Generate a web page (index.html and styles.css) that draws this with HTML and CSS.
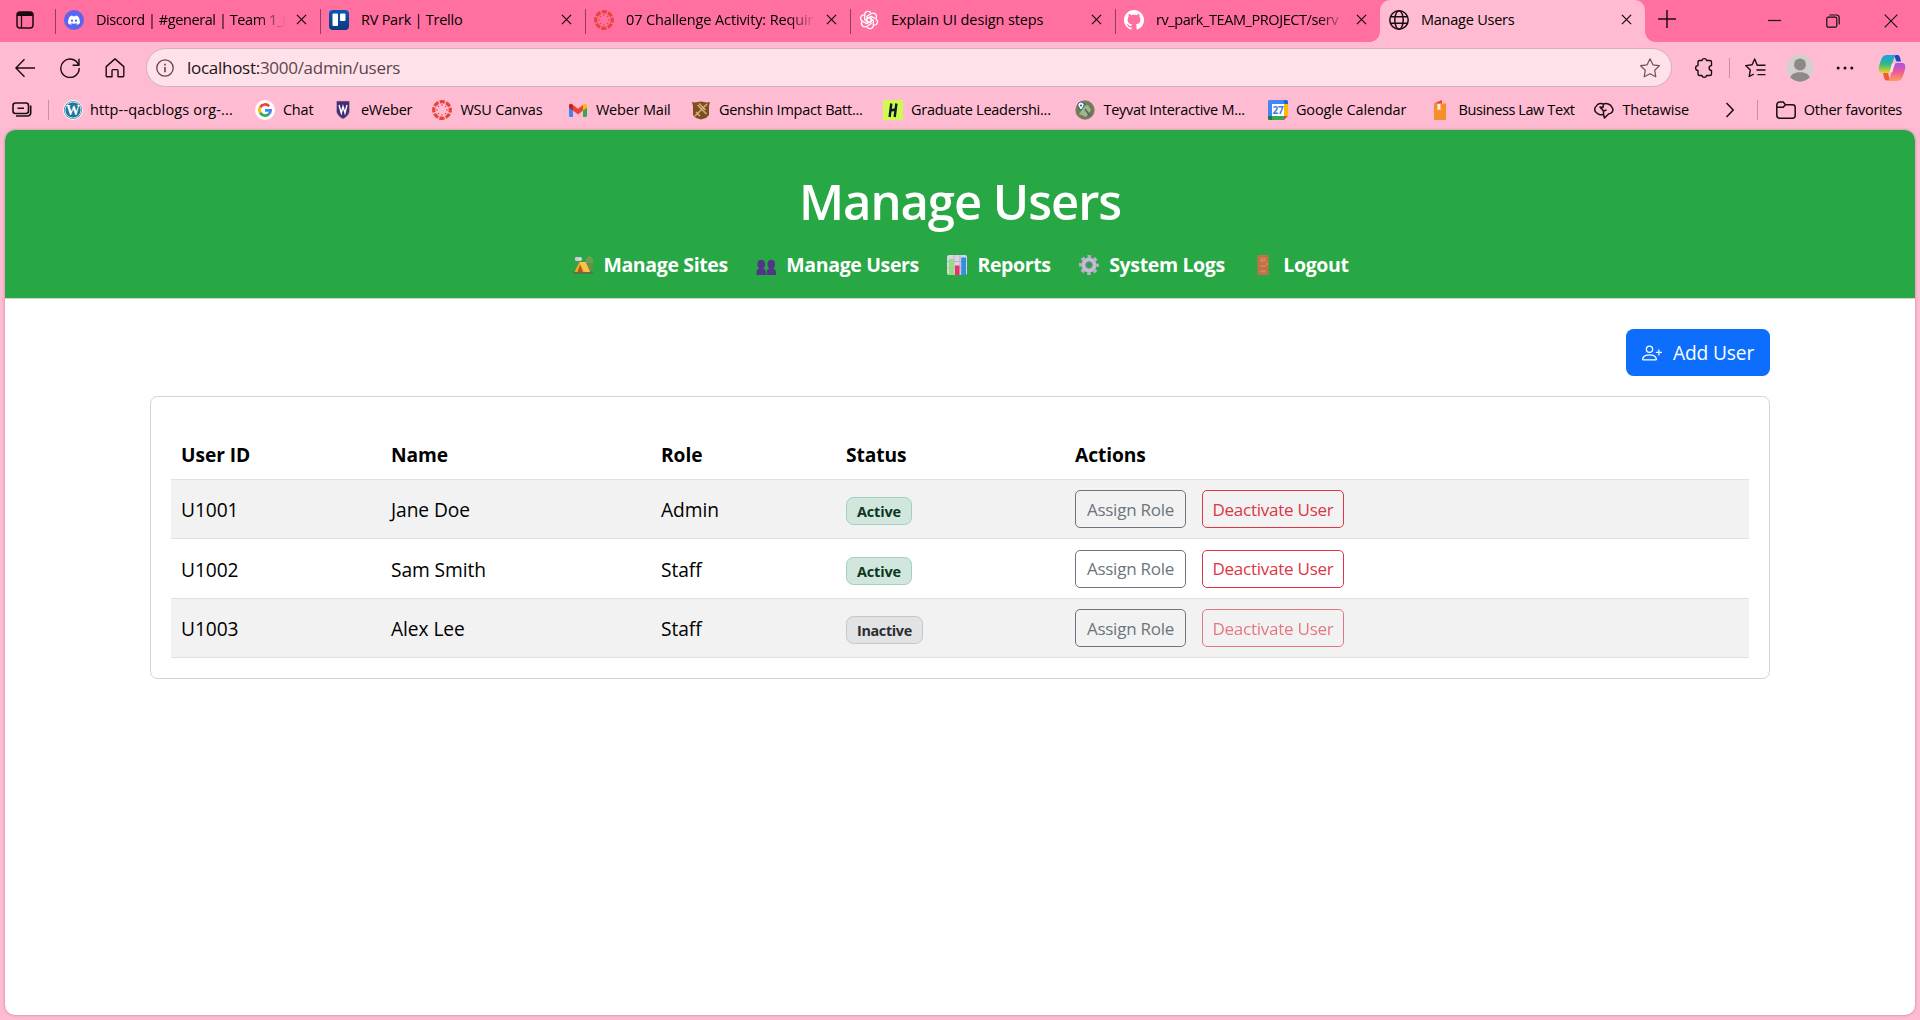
FILE: index.html
```html
<!DOCTYPE html>
<html lang="en">
<head>
<meta charset="utf-8">
<title>Manage Users</title>
<link rel="stylesheet" href="styles.css">
</head>
<body>
<svg class="defs" width="0" height="0" aria-hidden="true">
  <symbol id="x" viewBox="0 0 12 12"><path d="M1 1l10 10M11 1L1 11" fill="none" stroke="currentColor" stroke-width="1.4"/></symbol>
  <symbol id="canvas" viewBox="0 0 20 20">
    <circle cx="10" cy="10" r="8.3" fill="none" stroke="#e8433a" stroke-width="3.2" stroke-dasharray="5.2 1.32" stroke-dashoffset="2.6"/>
    <g fill="#e8433a"><circle cx="10" cy="5" r=".8"/><circle cx="10" cy="15" r=".8"/><circle cx="5" cy="10" r=".8"/><circle cx="15" cy="10" r=".8"/><circle cx="6.5" cy="6.5" r=".8"/><circle cx="13.5" cy="6.5" r=".8"/><circle cx="6.5" cy="13.5" r=".8"/><circle cx="13.5" cy="13.5" r=".8"/></g>
  </symbol>
</svg>

<header class="tabs">
  <div class="workspace">
    <svg width="18" height="18" viewBox="0 0 18 18"><rect x="1" y="1" width="16" height="16" rx="3" fill="none" stroke="#1a0a10" stroke-width="1.5"/><path d="M1 5V4a3 3 0 0 1 3-3h10a3 3 0 0 1 3 3v1z" fill="#1a0a10"/><path d="M5.5 5v12" stroke="#1a0a10" stroke-width="1.3"/></svg>
  </div>
  <div class="tab">
    <svg class="fav" viewBox="0 0 20 20"><circle cx="10" cy="10" r="10" fill="#5865f2"/><path transform="translate(4 4.2) scale(.75)" fill="#fff" d="M13.545 2.907a13.2 13.2 0 0 0-3.257-1.011.05.05 0 0 0-.052.025c-.141.25-.297.577-.406.833a12.2 12.2 0 0 0-3.658 0 8 8 0 0 0-.412-.833.05.05 0 0 0-.052-.025c-1.125.194-2.22.534-3.257 1.011a.04.04 0 0 0-.021.018C.356 6.024-.213 9.047.066 12.032q.003.022.021.037a13.3 13.3 0 0 0 3.995 2.02.05.05 0 0 0 .056-.019q.463-.63.818-1.329a.05.05 0 0 0-.01-.059l-.018-.011a9 9 0 0 1-1.248-.595.05.05 0 0 1-.005-.085q.126-.093.248-.195a.05.05 0 0 1 .051-.007c2.619 1.196 5.454 1.196 8.041 0a.05.05 0 0 1 .053.007q.121.1.248.195a.05.05 0 0 1-.004.085 8 8 0 0 1-1.249.594.05.05 0 0 0-.03.03.05.05 0 0 0 .003.041c.24.465.515.909.817 1.329a.05.05 0 0 0 .056.019 13.2 13.2 0 0 0 4.001-2.02.05.05 0 0 0 .021-.037c.334-3.451-.559-6.449-2.366-9.106a.03.03 0 0 0-.02-.019M5.347 10.214c-.789 0-1.438-.724-1.438-1.612s.637-1.613 1.438-1.613c.807 0 1.45.73 1.438 1.613 0 .888-.637 1.612-1.438 1.612m5.316 0c-.788 0-1.438-.724-1.438-1.612s.637-1.613 1.438-1.613c.807 0 1.451.73 1.438 1.613 0 .888-.631 1.612-1.438 1.612"/></svg>
    <span class="label fade">Discord | #general | Team 1_(</span>
    <svg class="close"><use href="#x"/></svg>
  </div>
  <div class="tab">
    <svg class="fav" viewBox="0 0 20 20"><defs><linearGradient id="tr" x2="0" y2="1"><stop stop-color="#0c57b5"/><stop offset="1" stop-color="#0a3a80"/></linearGradient></defs><rect width="20" height="20" rx="4" fill="url(#tr)"/><rect x="3.5" y="3.5" width="5.5" height="12.5" rx="1" fill="#fff"/><rect x="11" y="3.5" width="5.5" height="7.5" rx="1" fill="#fff"/></svg>
    <span class="label">RV Park | Trello</span>
    <svg class="close"><use href="#x"/></svg>
  </div>
  <div class="tab">
    <svg class="fav"><use href="#canvas"/></svg>
    <span class="label fade long">07 Challenge Activity: Requir</span>
    <svg class="close"><use href="#x"/></svg>
  </div>
  <div class="tab">
    <svg class="fav" viewBox="0 0 20 20" fill="none" stroke="#fff" stroke-width="1.25" stroke-linejoin="round">
      <g id="petal"><path d="M8 12.6V6.2l4.6-2.7c3-1.5 6.2 1.9 4.3 4.9"/></g>
      <use href="#petal" transform="rotate(60 10 10)"/><use href="#petal" transform="rotate(120 10 10)"/><use href="#petal" transform="rotate(180 10 10)"/><use href="#petal" transform="rotate(240 10 10)"/><use href="#petal" transform="rotate(300 10 10)"/>
    </svg>
    <span class="label long">Explain UI design steps</span>
    <svg class="close"><use href="#x"/></svg>
  </div>
  <div class="tab last">
    <svg class="fav" viewBox="0 0 16 16"><path fill="#fff" d="M8 0C3.58 0 0 3.58 0 8c0 3.54 2.29 6.53 5.47 7.59.4.07.55-.17.55-.38 0-.19-.01-.82-.01-1.49-2.01.37-2.53-.49-2.69-.94-.09-.23-.48-.94-.82-1.13-.28-.15-.68-.52-.01-.53.63-.01 1.08.58 1.23.82.72 1.21 1.87.87 2.33.66.07-.52.28-.87.51-1.07-1.78-.2-3.64-.89-3.64-3.95 0-.87.31-1.59.82-2.15-.08-.2-.36-1.02.08-2.12 0 0 .67-.21 2.2.82.64-.18 1.32-.27 2-.27s1.36.09 2 .27c1.53-1.04 2.2-.82 2.2-.82.44 1.1.16 1.92.08 2.12.51.56.82 1.27.82 2.15 0 3.07-1.87 3.75-3.65 3.95.29.25.54.73.54 1.48 0 1.07-.01 1.93-.01 2.2 0 .21.15.46.55.38A8.01 8.01 0 0 0 16 8c0-4.42-3.58-8-8-8"/></svg>
    <span class="label fade">rv_park_TEAM_PROJECT/serv</span>
    <svg class="close"><use href="#x"/></svg>
  </div>
  <div class="tab active">
    <svg class="fav" viewBox="0 0 20 20" fill="none" stroke="#1b0c12" stroke-width="1.5"><circle cx="10" cy="10" r="9.2"/><ellipse cx="10" cy="10" rx="4.2" ry="9.2"/><path d="M1.7 6.7h16.6M1.7 13.3h16.6"/></svg>
    <span class="label">Manage Users</span>
    <svg class="close"><use href="#x"/></svg>
  </div>
  <svg class="plus" width="18" height="18" viewBox="0 0 18 18"><path d="M9 0v18M0 9h18" stroke="#1b0c12" stroke-width="1.5"/></svg>
  <div class="window">
    <svg width="14" height="14" viewBox="0 0 14 14"><path d="M0 6.5h13" stroke="#111" stroke-width="1.2"/></svg>
    <svg width="14" height="14" viewBox="0 0 14 14" fill="none" stroke="#111" stroke-width="1.2"><rect x=".8" y="3.2" width="10" height="10" rx="1.5"/><path d="M3.5 1h7.2a2.5 2.5 0 0 1 2.5 2.5v7"/></svg>
    <svg width="14" height="14" viewBox="0 0 14 14"><path d="M.7.7l12.6 12.6M13.3.7L.7 13.3" stroke="#111" stroke-width="1.1"/></svg>
  </div>
</header>

<div class="toolbar">
  <svg width="20" height="20" viewBox="0 0 20 20" class="line"><path d="M20 10H1M9.5 1.2L.9 10l8.6 8.8"/></svg>
  <svg width="20" height="20" viewBox="0 0 20 20" class="line"><path d="M18.6 7A9.2 9.2 0 1 0 19.2 10M19 .8v6.4h-6.4"/></svg>
  <svg width="20" height="20" viewBox="0 0 20 20" class="line"><path d="M1.2 8.6L10 .9l8.8 7.7v9.2a1 1 0 0 1-1 1H13v-6.2a1 1 0 0 0-1-1H8a1 1 0 0 0-1 1v6.2H2.200a1 1 0 0 1-1-1z"/></svg>
  <div class="address">
    <svg width="18" height="18" viewBox="0 0 18 18" fill="none" stroke="#5b484f" stroke-width="1.3"><circle cx="9" cy="9" r="8.2"/><path d="M9 8v5.200M9 4.800v1.600" stroke-width="1.6"/></svg>
    <span class="url">localhost:<span>3000/admin/users</span></span>
    <svg class="star" width="22" height="22" viewBox="0 0 22 22" fill="none" stroke="#6b555d" stroke-width="1.2" stroke-linejoin="round"><path d="M11 1.800l2.900 6 6.500.9-4.700 4.600 1.100 6.500L11 16.700l-5.800 3.100 1.100-6.500L1.600 8.700l6.500-.9z"/></svg>
  </div>
  <div class="tools">
    <svg width="22" height="22" viewBox="0 0 22 22" class="line"><path d="M6.500 3.500h2.400a2.400 2.400 0 0 1 4.700 0H17a1.500 1.500 0 0 1 1.500 1.500v3.600a2.400 2.400 0 1 0 0 4.800V17a1.500 1.500 0 0 1-1.500 1.500h-3.400a2.400 2.400 0 0 1-4.700 0H6.500A1.500 1.500 0 0 1 5 17v-3.600a2.400 2.400 0 0 1 0-4.800V5a1.500 1.500 0 0 1 1.500-1.500z"/></svg>
    <i class="rule"></i>
    <svg width="22" height="22" viewBox="0 0 22 22" class="line"><path d="M14.200 8.300h-1L10.700 2 8.100 7.700l-6.400.9 4.600 4.500-1.100 6.400 4.500-2.400M14 8.300h7.500M12.500 13h9M13.500 17.600h8"/></svg>
    <svg class="avatar" width="28" height="28" viewBox="0 0 28 28"><circle cx="14" cy="14" r="13.500" fill="#d2cfcd"/><circle cx="14" cy="10.500" r="6" fill="#8d8986"/><path d="M4.300 23.500C6 16.500 22 16.500 23.700 23.500 18 29 10 29 4.300 23.500z" fill="#8d8986"/></svg>
    <svg width="18" height="18" viewBox="0 0 18 18" fill="#1b0c12"><circle cx="2.200" cy="9" r="1.500"/><circle cx="9" cy="9" r="1.500"/><circle cx="15.800" cy="9" r="1.500"/></svg>
    <svg class="copilot" width="28" height="28" viewBox="0 0 28 28">
      <defs>
        <linearGradient id="c1" x2="0" y2="1"><stop stop-color="#1aa0e8"/><stop offset=".5" stop-color="#2fb98a"/><stop offset="1" stop-color="#f5d21a"/></linearGradient>
        <linearGradient id="c2" x2="0" y2="1"><stop stop-color="#a352f2"/><stop offset=".5" stop-color="#ee5b92"/><stop offset="1" stop-color="#fba05c"/></linearGradient>
      </defs>
      <path d="M16 1h3.500c2.300 0 2.700 3 3.500 6.500h-4.500z" fill="#1748bd"/>
      <path d="M9.500 1h8.700c-2.600 2-3 6-5 14-.7 2.700-2 4-4.500 4H4C-.5 19 .3 14 2.500 7.500 4 3 5.500 1 9.500 1z" fill="url(#c1)"/>
      <path d="M12 26.500H8.500C6.200 26.500 5.800 22 5 19h5z" fill="#f05a36"/>
      <path d="M18.500 27H9.800c2.600-2 3-6 5-14 .7-2.700 2-4 4.500-4H24c4.500 0 3.700 5 1.500 11.500C24 25 22.500 27 18.500 27z" fill="url(#c2)"/>
      <path d="M13.900 9.500h3.300c-1 1.300-1.800 5-2.800 8.800H11.500c1-2.500 1.500-5.500 2.400-8.800z" fill="#ffe1ea"/>
    </svg>
  </div>
</div>

<nav class="bookmarks">
  <svg width="20" height="16" viewBox="0 0 20 16" fill="none" stroke="#1b0c12" stroke-width="1.6"><rect x="1" y="1" width="15.500" height="10.500" rx="2.500"/><path d="M5.500 6.200h6.500M18.700 3.500V11a3 3 0 0 1-3 3H4"/></svg>
  <i class="rule"></i>
  <div class="list">
    <a class="wide"><svg viewBox="0 0 20 20"><circle cx="10" cy="10" r="10" fill="#f6fafc"/><circle cx="10" cy="10" r="9" fill="#21759b"/><circle cx="10" cy="10" r="8" fill="none" stroke="#f6fafc" stroke-width=".8"/><text x="10" y="15.300" class="wp">W</text></svg>http--qacblogs org-...</a>
    <a><svg viewBox="0 0 20 20"><circle cx="10" cy="10" r="10" fill="#fff"/><g fill="none" stroke-width="2.700"><path d="M14.100 6.200A5.600 5.600 0 0 0 5.200 7.200" stroke="#ea4335"/><path d="M5.200 7.200a5.600 5.600 0 0 0 0 5.600" stroke="#fbbc05"/><path d="M5.200 12.800a5.600 5.600 0 0 0 8.700 1.200" stroke="#34a853"/><path d="M13.900 14a5.600 5.600 0 0 0 1.700-3.700H10" stroke="#4285f4"/></g></svg>Chat</a>
    <a><svg viewBox="0 0 20 20"><path d="M3.500 1h13v9.500c0 4-3 6.500-6.500 8.500-3.500-2-6.500-4.500-6.500-8.500z" fill="#442b72" stroke="#c9a7c9" stroke-width=".6"/><path d="M6 5l2.300 8L10 6.500l2 6.500L14 5" fill="none" stroke="#fff" stroke-width="1.400"/></svg>eWeber</a>
    <a><svg><use href="#canvas"/></svg>WSU Canvas</a>
    <a><svg viewBox="0 0 20 20"><path d="M1 6h4v11H2.300A1.300 1.300 0 0 1 1 15.700z" fill="#4285f4"/><path d="M15 6h4v9.700a1.300 1.300 0 0 1-1.300 1.300H15z" fill="#34a853"/><path d="M15 5c2-2.200 4-1.500 4 .7v2L15 10.600z" fill="#fbbc05"/><path d="M5 5C3 2.800 1 3.500 1 5.700v2L5 10.600z" fill="#c5221f"/><path d="M5 5l5 3.800L15 5v5.600l-5 3.800-5-3.800z" fill="#ea4335"/></svg>Weber Mail</a>
    <a><svg viewBox="0 0 20 20"><path d="M1 2l3 .5L10 1.500l6 1L19 2l-1 4v9l-3 3-5 1.500L5 18l-3-3V6z" fill="#7a4f24"/><path d="M4 16L16 4M6.500 5l9 9M8 3.500l6.500 6.500M5 12l4 4" stroke="#d7b173" stroke-width="1.500"/></svg>Genshin Impact Batt...</a>
    <a><svg viewBox="0 0 20 20"><path d="M0 0h20v20H0z" fill="#d0fb4c"/><path d="M8.300 3.500L6.600 17M13.400 3.500L11.700 17M7.500 10.500l5-1" stroke="#101b2d" stroke-width="2.400"/></svg>Graduate Leadershi...</a>
    <a><svg viewBox="0 0 20 20"><circle cx="10" cy="10" r="9" fill="#687f5b" stroke="#89785f" stroke-width="1.400"/><path d="M4 14c3-3 3-8 9-9l3 5-5 7z" fill="#a5b48c"/><path d="M10 9l5 7" stroke="#476759" stroke-width="1.500"/><path d="M6 10.500L3.400 6.700a3.100 3.100 0 1 1 5.200 0z" fill="#eef7f8" stroke="#315c71"/><circle cx="6" cy="5.500" r="1" fill="#30596c"/></svg>Teyvat Interactive M...</a>
    <a><svg viewBox="0 0 20 20"><path d="M0 1.500A1.500 1.500 0 0 1 1.500 0H16v4H4v12H0z" fill="#4285f4"/><path d="M16 0h2.500A1.500 1.500 0 0 1 20 1.500V4h-4z" fill="#1967d2"/><path d="M16 4h4v12h-4z" fill="#fbbc04"/><path d="M0 16h16v4H1.500A1.500 1.500 0 0 1 0 18.500z" fill="#188038"/><path d="M4 16h12v4H4z" fill="#34a853"/><path d="M16 16h4l-4 4z" fill="#ea4335"/><path d="M4 4h12v12H4z" fill="#fff"/><text x="10" y="13.700" class="cal">27</text></svg>Google Calendar</a>
    <a class="law"><svg viewBox="0 0 20 20"><path d="M4 3.500h12V20H4z" fill="#f88d2b"/><path d="M4 3.500L12 0v3.500z" fill="#df4c25"/><path d="M7.500 4h3v6.500L9 9.300l-1.500 1.200z" fill="#fff2e7"/></svg>Business Law Text</a>
    <a><svg viewBox="0 0 20 20" fill="none" stroke="#1c1116" stroke-width="1.500" stroke-linejoin="round"><path d="M3 13C.3 12-.2 8 2.400 6 4 3 7.500 3 9.500 4c3-1 7 0 8.200 3 2 2 1.300 5-.7 6-1 .8-2 .8-2.500 1L10.500 18l-1-3.500M9.500 4L9 7.500 6 7l3.500 4v3.500C8 15 4.500 15 3 13M9.500 11l3-1"/></svg>Thetawise</a>
  </div>
  <svg width="10" height="16" viewBox="0 0 10 16" fill="none" stroke="#1b0c12" stroke-width="1.500"><path d="M1.500 1l6.700 7-6.700 7"/></svg>
  <i class="rule second"></i>
  <a class="other"><svg viewBox="0 0 20 20" fill="none" stroke="#1b0c12" stroke-width="1.500"><path d="M.8 5a3 3 0 0 1 3-3h3.400l2.300 2.700h7a2.700 2.700 0 0 1 2.700 2.700V15.500a2.700 2.700 0 0 1-2.700 2.700H3.800a3 3 0 0 1-3-3zM.8 7.300h6.400l2.300-2.600"/></svg>Other favorites</a>
</nav>

<main class="page">
  <section class="hero">
    <h1>Manage Users</h1>
    <div class="links">
      <a class="sites"><svg viewBox="0 0 20 20"><path d="M0 16.500c6-1.500 13-1.500 20 0V19H0z" fill="#5d7440"/><path d="M16.500 0l3.500 8v8h-7V8z" fill="#5f9345"/><path d="M12.500 4.500L16.500 0 20 4v4h-7z" fill="#6ba04f"/><path d="M6.500 7h6L17 17H1.500z" fill="#f7a92e"/><path d="M6.500 7h6L17 17h-5z" fill="#ffc04f"/><path d="M7 9.500L10 17H4.500z" fill="#a65d18"/><circle cx="4" cy="4" r="2.200" fill="#cfc6dc"/><circle cx="7" cy="4" r="2" fill="#dcd5e6"/></svg><span>Manage Sites</span></a>
      <a class="users"><svg viewBox="0 0 20 20" fill="#533587"><path d="M1.500 8.500c0-5 7.500-5 7.500 0s-1.500 4-1.500 5.500c2 0 2.500 1.500 2.500 6H.5c0-4.500.5-6 2.500-6 0-1.500-1.500-1-1.500-5.500z"/><path d="M11.500 8.500c0-5 7.500-5 7.500 0s-1.500 4-1.500 5.500c2 0 2.500 1.500 2.500 6h-9.500c0-4.500.5-6 2.500-6 0-1.500-1.500-1-1.500-5.500z"/></svg><span>Manage Users</span></a>
      <a class="reports"><svg viewBox="0 0 20 20"><rect width="20" height="20" rx="2" fill="#dcd3e3"/><path d="M0 6.500h20M0 13h20M7 0v20M13 0v20" stroke="#b7abc3" stroke-width=".8"/><path d="M2 4h4.500v16H2z" fill="#8fe07b"/><path d="M8 10.500h4.500V20H8z" fill="#e8316b"/><path d="M14.200 2.500h4.800V20h-4.800z" fill="#2f8fe3"/></svg><span>Reports</span></a>
      <a class="logs"><svg viewBox="0 0 20 20"><circle cx="10" cy="10" r="8.600" fill="none" stroke="#bcb0cc" stroke-width="2.700" stroke-dasharray="3.600 3.155" stroke-dashoffset="1.800"/><circle cx="10" cy="10" r="5.400" fill="none" stroke="#c6bbd6" stroke-width="4.400"/><circle cx="10" cy="10" r="3.300" fill="none" stroke="#8e819d" stroke-width="1"/></svg><span>System Logs</span></a>
      <a class="logout"><svg viewBox="0 0 20 20"><path d="M4.500 0h11v20h-11z" fill="#c57346"/><path d="M6.500 2h7v5.500h-7zM6.500 9.500h7v3h-7zM6.500 14.500h7v3.500h-7z" fill="#d38258" stroke="#b5683f" stroke-width=".7"/><circle cx="14" cy="9" r=".8" fill="#f2b13f"/></svg><span>Logout</span></a>
    </div>
  </section>
  <section class="content">
    <button class="add"><svg width="20" height="20" viewBox="0 0 16 16" fill="#fff"><path d="M6 8a3 3 0 1 0 0-6 3 3 0 0 0 0 6m2-3a2 2 0 1 1-4 0 2 2 0 0 1 4 0m4 8c0 1-1 1-1 1H1s-1 0-1-1 1-4 6-4 6 3 6 4m-1-.004c-.001-.246-.154-.986-.832-1.664C9.516 10.680 8.289 10 6 10s-3.516.680-4.168 1.332c-.678.678-.830 1.418-.832 1.664z"/><path d="M13.500 5a.5.5 0 0 1 .5.5V7h1.500a.5.5 0 0 1 0 1H14v1.500a.5.5 0 0 1-1 0V8h-1.500a.5.5 0 0 1 0-1H13V5.500a.5.5 0 0 1 .5-.5"/></svg><span>Add User</span></button>
    <div class="card">
      <table>
        <colgroup><col class="c-id"><col class="c-name"><col class="c-role"><col class="c-status"><col></colgroup>
        <thead><tr><th>User ID</th><th>Name</th><th>Role</th><th>Status</th><th>Actions</th></tr></thead>
        <tbody>
          <tr><td>U1001</td><td>Jane Doe</td><td>Admin</td><td><span class="badge on">Active</span></td><td><div class="acts"><button class="btn assign">Assign Role</button><button class="btn drop">Deactivate User</button></div></td></tr>
          <tr><td>U1002</td><td>Sam Smith</td><td>Staff</td><td><span class="badge on">Active</span></td><td><div class="acts"><button class="btn assign">Assign Role</button><button class="btn drop">Deactivate User</button></div></td></tr>
          <tr><td>U1003</td><td>Alex Lee</td><td>Staff</td><td><span class="badge off">Inactive</span></td><td><div class="acts"><button class="btn assign">Assign Role</button><button class="btn drop" disabled>Deactivate User</button></div></td></tr>
        </tbody>
      </table>
    </div>
  </section>
</main>
</body>
</html>
```
FILE: styles.css
```css
* { box-sizing: border-box; }
body {
  margin: 0;
  width: 1920px;
  height: 1020px;
  overflow: hidden;
  display: flex;
  flex-direction: column;
  background: #ffbbd1;
  font-family: "Open Sans", "Noto Sans", sans-serif;
  color: #000;
}
svg { display: block; flex: none; }
.defs { position: absolute; }
button { font: inherit; letter-spacing: inherit; }

/* tab strip */
.tabs { display: flex; height: 42px; background: #ff70a0; flex: none; }
.workspace { width: 55px; padding: 11px 0 0 16px; }
.tab {
  width: 265px;
  display: flex;
  align-items: center;
  padding: 0 13px 3px 9px;
  font-size: 14.5px;
  letter-spacing: -.24px;
  background: linear-gradient(#8f3f5c, #8f3f5c) 0 9px / 1px 25px no-repeat;
}
.fav { width: 20px; height: 20px; margin-right: 12px; }
.label { flex: 1; overflow: hidden; white-space: nowrap; margin-right: 10px; }
.fade { letter-spacing: -.42px; -webkit-mask: linear-gradient(90deg, #000 calc(100% - 28px), transparent); mask: linear-gradient(90deg, #000 calc(100% - 28px), transparent); }
.long { letter-spacing: -.12px; }
.close { width: 11px; height: 11px; color: #1b0c12; }
.tab.active { position: relative; background: #ffbbd1; border-radius: 10px 10px 0 0; }
.tab.active::before, .tab.active::after { content: ""; position: absolute; bottom: 0; width: 10px; height: 10px; }
.tab.active::before { left: -10px; background: radial-gradient(circle at 0 0, transparent 9.5px, #ffbbd1 10px); }
.tab.active::after { right: -10px; background: radial-gradient(circle at 100% 0, transparent 9.5px, #ffbbd1 10px); }
.plus { margin: 10px 0 0 13px; }
.window { display: flex; gap: 44px; margin: 14px 22px 0 auto; }

/* toolbar */
.toolbar { display: flex; align-items: center; height: 52px; padding: 0 13px 1px 15px; gap: 25px; flex: none; }
.line { fill: none; stroke: #1b0c12; stroke-width: 1.4; stroke-linejoin: round; }
.address {
  display: flex;
  flex: none;
  align-items: center;
  width: 1526px;
  height: 39px;
  margin-left: -4px;
  padding: 0 10px 0 9px;
  border: 1px solid #cdb3bd;
  border-radius: 20px;
  background: #ffe1ea;
}
.url { margin-left: 13px; font-size: 17px; letter-spacing: -.28px; flex: 1; color: #1c1518; }
.url span { color: #59474e; }
.tools { display: flex; align-items: center; flex: none; margin-left: -4px; }
.rule { width: 1px; height: 20px; background: #c98fa4; }
.tools .rule { margin: 0 14px 0 14px; }
.tools .avatar { margin: 0 22px 0 20px; }
.tools .copilot { margin-left: 24px; }

/* bookmarks */
.bookmarks { display: flex; align-items: center; height: 36px; padding: 0 18px 5px 12px; font-size: 14.5px; letter-spacing: -.2px; flex: none; }
.bookmarks > .rule { margin: 0 14px 0 16px; }
.list { display: grid; flex: none; width: 1662px; grid-template-columns: 192px 78px 99.5px 135.5px 123px 192px 192.5px 192.5px 162.5px 164px 1fr; }
.bookmarks a { display: flex; align-items: center; gap: 8px; white-space: nowrap; }
.bookmarks a.wide { gap: 7px; letter-spacing: .15px; }
.bookmarks a.law { letter-spacing: -.4px; }
.bookmarks a:nth-child(6), .bookmarks a:nth-child(7), .bookmarks a:nth-child(8) { letter-spacing: -.25px; }
.bookmarks a:nth-child(9) { letter-spacing: -.12px; }
.bookmarks a svg { width: 20px; height: 20px; }
.bookmarks > .rule.second { margin: 0 18px 0 22px; }
.wp { font: 700 14px "Liberation Serif", serif; letter-spacing: 0; fill: #fff; text-anchor: middle; }
.cal { font: 700 10px "Open Sans", sans-serif; fill: #3b78e7; text-anchor: middle; }

/* page */
.page {
  flex: 1;
  margin: 0 5px 5px;
  background: #fff;
  border-radius: 10px;
  overflow: hidden;
  box-shadow: 0 0 3px rgba(120, 50, 80, .45);
}
.hero { height: 169px; background: #28a745; color: #fff; padding-top: 40px; border-bottom: 1px solid #c9d6cc; }
h1 { margin: 0; font-size: 49px; line-height: 62px; font-weight: 600; letter-spacing: -1.050px; text-align: center; }
.links { display: flex; justify-content: center; gap: 28.5px; margin-top: 20px; padding-left: 2px; font-size: 19.500px; letter-spacing: -.36px; line-height: 26px; font-weight: 700; }
.links a { display: flex; align-items: center; gap: 10px; white-space: nowrap; }
.links svg { width: 20px; height: 20px; }
.content { width: 1620px; margin: 30px auto 0; display: flex; flex-direction: column; align-items: flex-end; }
.add {
  display: flex;
  align-items: center;
  width: 144px;
  height: 47px;
  padding: 0 16px;
  gap: 11px;
  border: 0;
  border-radius: 7.5px;
  background: #0d6efd;
  color: #fff;
  font-size: 19.200px;
  letter-spacing: -.15px;
  white-space: nowrap;
}
.card { width: 100%; height: 283px; margin-top: 20px; padding: 32px 20px 0; border: 1px solid #d2d3d4; border-radius: 7.5px; }
table { width: 1578px; border-collapse: collapse; table-layout: fixed; font-size: 19.200px; letter-spacing: -.08px; }
.c-id { width: 210px; }
.c-name { width: 270px; }
.c-role { width: 185px; }
.c-status { width: 229px; }
th, td { padding: 2px 10px 0; text-align: left; border-bottom: 1px solid #dee2e6; }
th { height: 50px; font-weight: 700; }
td { height: 59.500px; }
td:last-child { padding-top: 1px; }
tbody tr:nth-child(odd) { background: #f2f2f2; }
.badge { display: inline-block; padding: 0 10px; height: 28px; line-height: 27px; font-size: 14.400px; letter-spacing: -.12px; font-weight: 700; border: 1px solid; border-radius: 7.5px; vertical-align: middle; margin-top: 2px; }
.on { color: #0a3622; background: #d1e7dd; border-color: #a3cfbb; }
.off { color: #2b2f32; background: #e2e3e5; border-color: #c4c8cb; letter-spacing: -.35px; }
.acts { display: flex; gap: 16px; }
.btn { height: 38px; padding: 0; border: 1px solid; border-radius: 5px; background: transparent; font-size: 17px; letter-spacing: -.24px; white-space: nowrap; }
.assign { width: 111px; color: #6c757d; border-color: #6c757d; }
.drop { width: 142px; color: #dc3545; border-color: #dc3545; }
.drop:disabled { opacity: .65; }
```
